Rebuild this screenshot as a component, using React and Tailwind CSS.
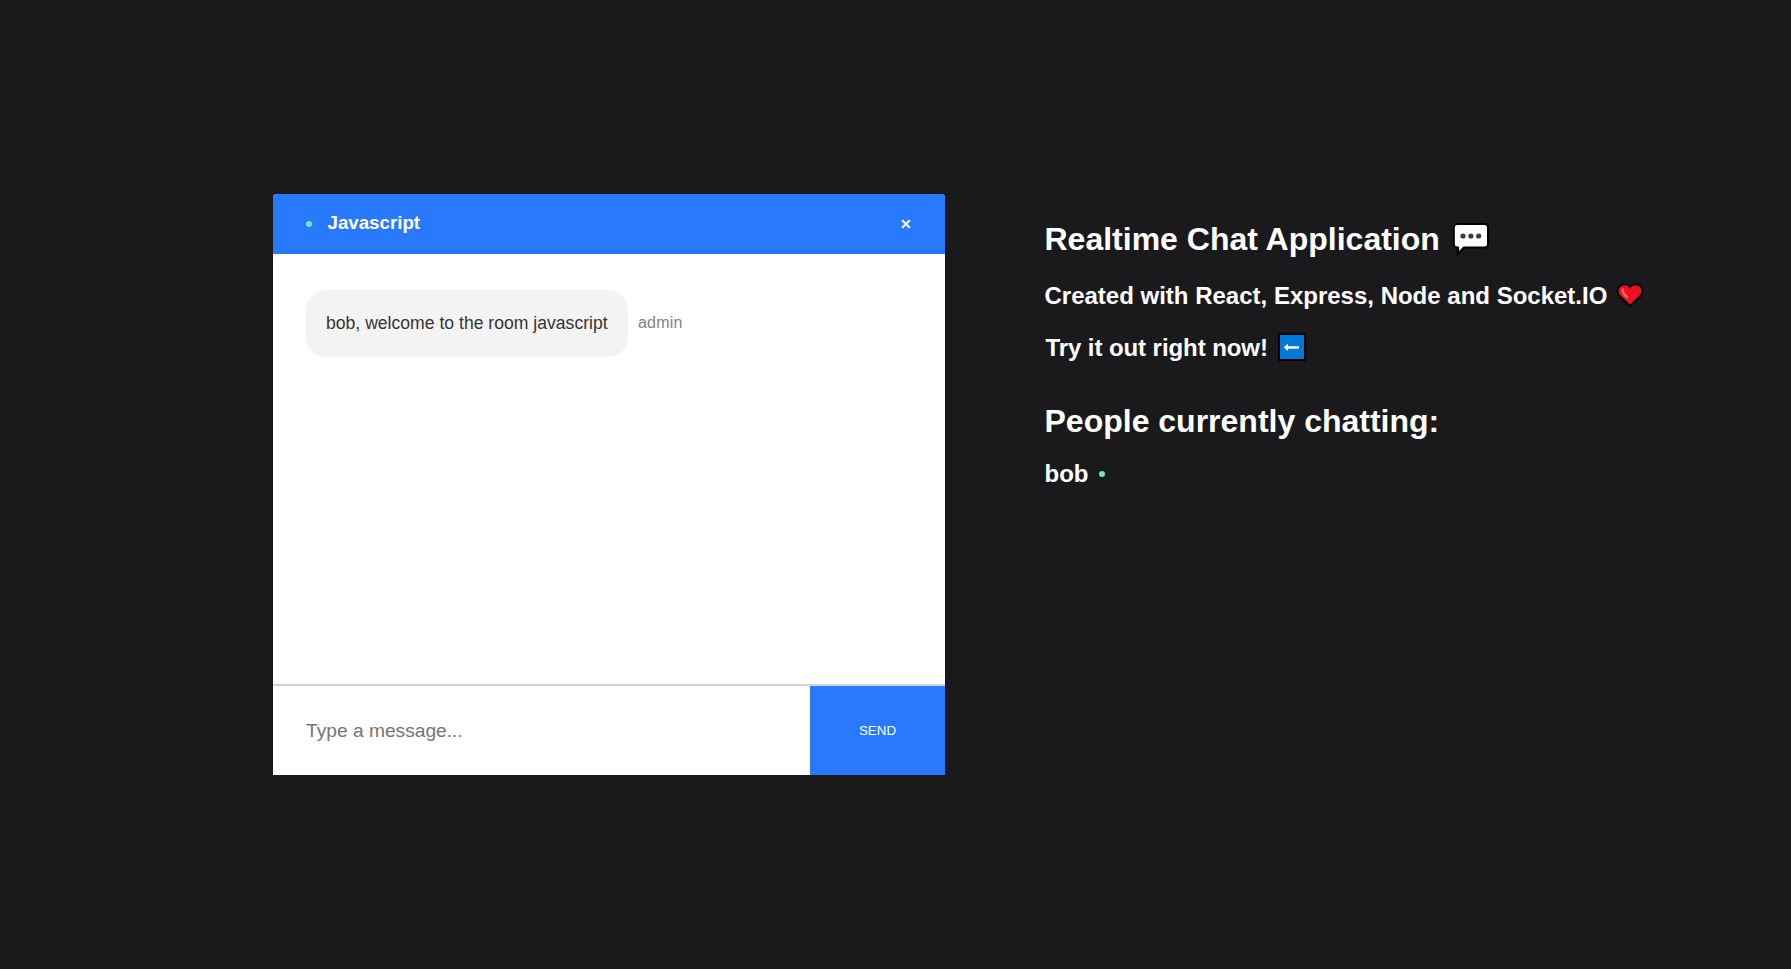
function SpeechIcon() {
  return (
    <svg className="mt-px block h-[36px] w-[38px]" viewBox="0 0 38 36">
      <path d="M5.500 1H32Q37 1 37 6V22Q37 26.500 32 26.500H13L4.800 34.500V26.500Q1 26 1 22V6Q1 1 5.500 1Z" fill="#000" />
      <path d="M5.300 3H32.500Q35 3 35 5.300V22Q35 24.500 32.500 24.500H11.500L7 29V24.500H5.300Q2.800 24.500 2.800 22V5.300Q2.800 3 5.300 3Z" fill="#fff" />
      <g fill="#3b3b3b">
        <circle cx="11" cy="14" r="2.600" />
        <circle cx="18.900" cy="14" r="2.600" />
        <circle cx="26.700" cy="14" r="2.600" />
      </g>
    </svg>
  );
}

function HeartIcon() {
  return (
    <svg className="block h-[27px] w-[28px]" viewBox="0 0 28 27">
      <path d="M14 24L3.500 13.700C.5 10 1.200 6 4 3.800C7 1.500 11.500 2 14 5C16.500 2 21 1.500 24 3.800C26.800 6 27.500 10 24.500 13.700Z" fill="#000" stroke="#000" strokeWidth="2" strokeLinejoin="round" />
      <path d="M14 22.800L4.200 13.200C1.800 10.200 2.200 6.500 4.700 4.500C7.500 2.400 11.800 3.200 14 6.300C16.200 3.200 20.500 2.400 23.300 4.500C25.800 6.500 26.200 10.200 23.800 13.200Z" fill="#e81224" />
      <path d="M6.800 7.500C6.200 10.500 8.500 13 11 15" fill="none" stroke="#f4675b" strokeWidth="2.600" strokeLinecap="round" />
    </svg>
  );
}

function ArrowIcon() {
  return (
    <svg className="-mt-px block h-[28px] w-[28px]" viewBox="0 0 28 28">
      <path d="M0 0H28V28H0Z" fill="#000" />
      <path d="M2 2H26V26H2Z" fill="#0078d7" />
      <path d="M5.700 14.300L10 10.800V13.200H21V15.800H10V17.900Z" fill="#fff" />
    </svg>
  );
}

function OnlineDot() {
  return <span className="block h-[6px] w-[6px] rounded-full bg-[#69f0ae]" />;
}

function Chat() {
  return (
    <section className="flex h-[581px] w-[672px] shrink-0 flex-col overflow-hidden rounded-t-[4px] bg-white">
      <header className="flex h-[60px] shrink-0 items-center justify-between bg-[#2979ff] pr-[34px] pl-[33px]">
        <div className="flex items-center gap-[15.5px]">
          <OnlineDot />
          <h3 className="-mt-[4px] text-[18.72px] leading-[21px] font-bold text-white">Javascript</h3>
        </div>
        <button type="button" aria-label="Leave room">
          <svg className="block h-[10px] w-[10px]" viewBox="0 0 10 10">
            <path d="M1.200 1.200L8.800 8.800M8.800 1.200L1.200 8.800" stroke="#fff" strokeWidth="2.100" />
          </svg>
        </button>
      </header>
      <div className="flex flex-1 items-start px-[33px] pt-[36px]">
        <div className="flex items-center">
          <div className="flex h-[67px] w-[322px] items-center rounded-[20px] bg-[#f3f3f3] pb-[2px] pl-[20px]">
            <p className="text-[17.6px] leading-[20px] whitespace-nowrap text-[#353535]">bob, welcome to the room javascript</p>
          </div>
          <p className="-mt-[2px] pl-[10px] text-[16px] leading-[18px] tracking-[0.2px] text-[#828282]">admin</p>
        </div>
      </div>
      <form className="flex h-[91px] shrink-0 border-t-2 border-[#d3d3d3]">
        <input
          type="text"
          placeholder="Type a message..."
          className="w-[537px] px-[33px] pt-px text-[19.2px] text-[#353535] outline-none placeholder:text-[#757575]"
        />
        <button type="button" className="w-[135px] bg-[#2979ff] text-[13.333px] text-white">
          SEND
        </button>
      </form>
    </section>
  );
}

function About() {
  return (
    <aside className="ml-[99.5px] flex w-[620px] flex-col pt-[27px] font-bold whitespace-nowrap text-white">
      <div className="flex h-[37px] gap-[12.5px]">
        <h1 className="text-[32px] leading-[37px]">Realtime Chat Application</h1>
        <SpeechIcon />
      </div>
      <div className="mt-[24px] flex h-[27px] gap-[9px]">
        <h2 className="text-[24px] leading-[27px]">Created with React, Express, Node and Socket.IO</h2>
        <HeartIcon />
      </div>
      <div className="mt-[25px] flex h-[27px] gap-[10.5px] pl-px">
        <h2 className="text-[24px] leading-[27px] tracking-[-0.08px]">Try it out right now!</h2>
        <ArrowIcon />
      </div>
      <h1 className="mt-[42px] text-[32px] leading-[37px]">People currently chatting:</h1>
      <div className="mt-[20px] flex h-[27px] items-center gap-[10.5px]">
        <h2 className="text-[24px] leading-[27px]">bob</h2>
        <OnlineDot />
      </div>
    </aside>
  );
}

export default function App() {
  return (
    <main className="flex h-screen items-start overflow-hidden bg-[#1a1a1d] pt-[194px] pl-[273px] font-['Liberation_Sans',Arial,sans-serif]">
      <Chat />
      <About />
    </main>
  );
}
